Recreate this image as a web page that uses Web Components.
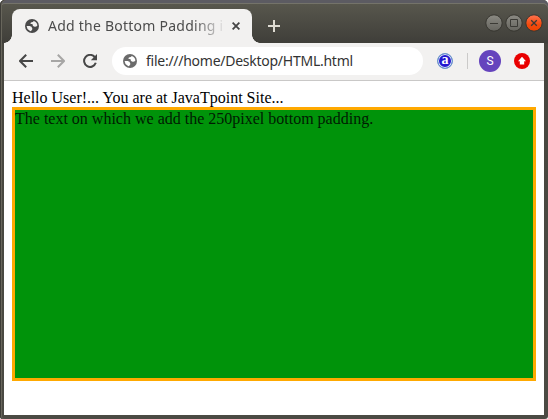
<!DOCTYPE html>
<html lang="en">
<head>
<meta charset="utf-8">
<title>Add the Bottom Padding</title>
<style>
html,body{margin:0;height:100%;overflow:hidden;background:#fff}
</style>
</head>
<body>
<browser-window>
  <tab-strip slot="tabs"><browser-tab>Add the Bottom Padding i</browser-tab></tab-strip>
  <tool-bar slot="tools">file:///home/Desktop/HTML.html</tool-bar>
  <page-view>
    <span slot="intro">Hello User!... You are at JavaTpoint Site...</span>
    <padded-box>The text on which we add the 250pixel bottom padding.</padded-box>
  </page-view>
</browser-window>
<script>
const define = (name, html) => customElements.define(name, class extends HTMLElement {
  constructor() { super(); this.attachShadow({mode: 'open'}).innerHTML = html; }
});

define('globe-icon', `<style>:host{display:block;width:14px;height:14px;color:#4a4a4a;flex:none}svg{display:block}</style>
<svg width="14" height="14" viewBox="0 0 14 14"><circle cx="7" cy="7" r="7" fill="currentColor"/>
<path d="M1.6 6.9H4.6Q7 6.9 7.3 9.4H5.3V11.4H4.4A5.5 5.5 0 0 1 1.6 6.9ZM8.8 1.9Q7.9 3.3 6.6 3.3Q5.3 3.6 5.5 5.1H7.4Q7.5 7.7 9.6 7.8Q11.3 8 12.4 6.6A5.5 5.5 0 0 0 8.8 1.9ZM7.3 9.4V10.3Q7.1 11.4 5.6 12.2L4.4 11.4L5.3 9.4Z" fill="var(--hole,#f2f1f0)"/></svg>`);

define('browser-window', `<style>
:host{display:grid;grid-template-rows:43px 38px 1fr;box-sizing:border-box;width:548px;height:419px;padding:0 4px 4px;overflow:hidden;
background:linear-gradient(#5a594f,#3f3e39 43px,#47463f 44px,#4b4a43);border-radius:5px 5px 3px 3px;box-shadow:inset 1px 0 #3d3c37,inset 2px 0 #68665c,inset 0 3px #5c5b62,inset 0 4px #74736a}
</style><slot name="tabs"></slot><slot name="tools"></slot><slot></slot>`);

define('window-controls', `<style>:host{display:block;margin:14px 1px 0 auto;width:58px;height:18px}svg{display:block}</style>
<svg width="58" height="18" viewBox="0 0 58 18"><defs>
<linearGradient id="g" x2="0" y2="1"><stop stop-color="#8b8a83"/><stop offset="1" stop-color="#65645e"/></linearGradient>
<linearGradient id="o" x2="0" y2="1"><stop stop-color="#ff7350"/><stop offset=".6" stop-color="#f34a0d"/><stop offset="1" stop-color="#ec4402"/></linearGradient></defs>
<g stroke="#373630"><circle cx="9" cy="9" r="8.2" fill="url(#g)"/><circle cx="29" cy="9" r="8.2" fill="url(#g)"/><circle cx="49" cy="9" r="8.2" fill="url(#o)"/></g>
<g fill="none" stroke="#3b3a35"><path d="M5 9.5H13M25.5 5.5H32.5V12.5H25.5Z"/><path d="M46.2 6.2L51.8 11.8M51.8 6.2L46.2 11.8" stroke-width="1.3"/></g></svg>`);

define('tab-strip', `<style>:host{display:flex;align-items:flex-start;height:43px}
.plus{margin:20px 0 0 8px}svg{display:block}</style><slot></slot>
<svg class="plus" width="12" height="12"><path d="M6 0V12M0 6H12" stroke="#dedbd2" stroke-width="2"/></svg><window-controls></window-controls>`);

define('browser-tab', `<style>
:host{display:grid;grid-template-columns:8px 240px 8px;height:34px;margin-top:9px;flex:none}
.foot{align-self:end;height:8px}.l{background:radial-gradient(circle at 0 0,transparent 7.5px,#f2f1f0 8px)}.r{background:radial-gradient(circle at 100% 0,transparent 7.5px,#f2f1f0 8px)}
.tab{display:flex;align-items:center;box-sizing:border-box;background:#f2f1f0;border-radius:8px 8px 0 0;padding:0 12px 0 13px}
.title{width:175px;margin-left:9px;overflow:hidden;white-space:nowrap;font:14px/20px "Noto Sans","Open Sans",sans-serif;letter-spacing:.24px;color:#4c4c4c;-webkit-mask-image:linear-gradient(90deg,#000 145px,transparent 178px)}
.x{margin-left:auto}
</style><div class="foot l"></div><div class="tab"><globe-icon></globe-icon><div class="title"><slot></slot></div>
<svg class="x" width="8" height="8"><path d="M.6 .6L7.4 7.4M7.4 .6L.6 7.4" stroke="#454545" stroke-width="1.8"/></svg></div><div class="foot r"></div>`);

define('tool-bar', `<style>
:host{display:flex;align-items:center;height:38px;box-sizing:border-box;padding:0 14px 1px 15px;background:#f2f1f0;border-bottom:1px solid #c9c8c7}
svg{display:block;flex:none}
.address{display:flex;align-items:center;box-sizing:border-box;width:311px;height:28px;margin:0 14px 0 15px;padding-left:11px;border-radius:14px;background:#fff}
globe-icon{color:#6b6b6b;--hole:#fff}
.url{margin-left:9px;font:14px/20px "Noto Sans","Open Sans",sans-serif;letter-spacing:-.26px;color:#333;white-space:nowrap}
.sep{width:1px;height:16px;background:#cbcac9;margin:0 11px 0 14px}
.avatar{width:22px;height:22px;border-radius:50%;background:#6544bd;color:#fff;text-align:center;font:12px/22px Roboto,sans-serif;margin-right:13px}
.ext{display:grid;place-items:center;box-sizing:border-box;width:16px;height:16px;border-radius:50%;border:1px solid #6d9cc9;background:#2418d0;box-shadow:inset 0 0 0 1px #d7e8f5;color:#fff;font:bold 14px/14px "Liberation Serif",serif}
.ext span{display:block;margin-top:-3px}
</style>
<svg width="14" height="14"><path d="M14 7H1.5M7.2 .8L1 7L7.2 13.2" fill="none" stroke="#474747" stroke-width="2"/></svg>
<svg width="14" height="14" style="margin-left:18px"><path d="M0 7H12.5M6.8 .8L13 7L6.8 13.2" fill="none" stroke="#a7a6a5" stroke-width="2"/></svg>
<svg width="14" height="14" style="margin-left:18px"><path d="M11.7 3A6 6 0 1 0 12.8 8.8" fill="none" stroke="#474747" stroke-width="2"/><path d="M14 0V6.2H7.8Z" fill="#474747"/></svg>
<div class="address"><globe-icon></globe-icon><div class="url"><slot></slot></div></div>
<div class="ext"><span>a</span></div><div class="sep"></div><div class="avatar">S</div>
<svg width="16" height="16"><circle cx="8" cy="8" r="8" fill="#e90000"/><path d="M8 3.8L12 8.2H10.2V11.5H5.8V8.2H4Z" fill="#fff"/></svg>`);

define('page-view', `<style>:host{display:block;padding:8px;background:#fff;color:#000;font:16px/18px "Liberation Serif",serif}
.intro{height:18px}</style><div class="intro"><slot name="intro"></slot></div><slot></slot>`);

define('padded-box', `<style>:host{display:block;height:18px;padding-bottom:250px;border:3px solid #ffa900;background:#00930a;color:#001b02}</style><slot></slot>`);
</script>
</body>
</html>
